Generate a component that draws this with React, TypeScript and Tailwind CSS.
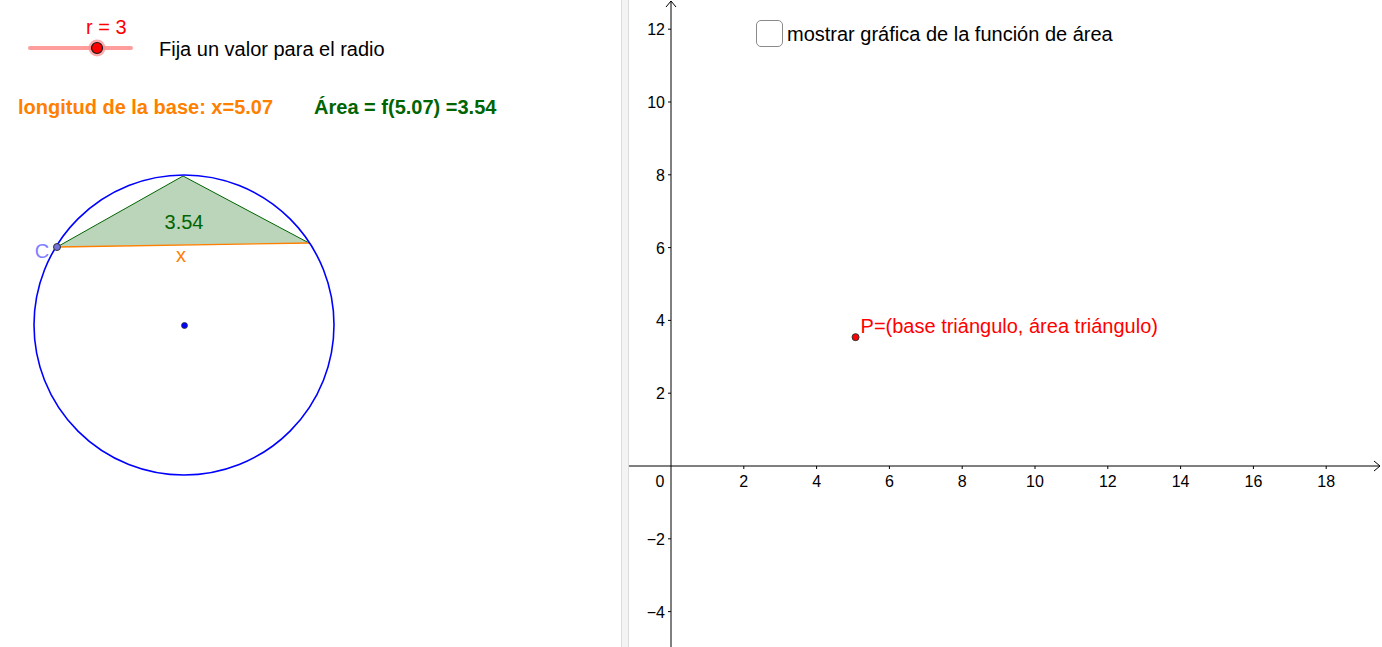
import React from 'react';

const FONT = "font-['Liberation_Sans',Arial,sans-serif]";

// graphics view 2 settings
const ORIGIN_X = 42;
const ORIGIN_Y = 466;
const UNIT = 36.4;

const X_TICKS = [2, 4, 6, 8, 10, 12, 14, 16, 18];
const Y_TICKS = [12, 10, 8, 6, 4, 2, -2, -4];

const px = (v: number) => ORIGIN_X + v * UNIT;
const py = (v: number) => ORIGIN_Y - v * UNIT;

const CircleView: React.FC = () => {
  const C = { x: 57, y: 247 };
  const B = { x: 309, y: 243 };
  const A = { x: 183, y: 176 };
  return (
    <svg width="621" height="647" className="absolute left-0 top-0" style={{ fontFamily: 'Liberation Sans, Arial, sans-serif' }}>
      {/* slider */}
      <line x1="30" y1="48" x2="131" y2="48" stroke="#ff9c9c" strokeWidth="4" strokeLinecap="round" />
      <circle cx="97" cy="48" r="8.5" fill="#ff8f8f" fillOpacity="0.75" />
      <circle cx="97" cy="48" r="5.5" fill="#ff0000" stroke="#1a1a1a" strokeWidth="1.2" />

      {/* triangle */}
      <polygon points={`${C.x},${C.y} ${A.x},${A.y} ${B.x},${B.y}`} fill="#006400" fillOpacity="0.27" />
      <line x1={C.x} y1={C.y} x2={A.x} y2={A.y} stroke="#006400" strokeWidth="1" />
      <line x1={A.x} y1={A.y} x2={B.x} y2={B.y} stroke="#006400" strokeWidth="1" />
      <line x1={C.x} y1={C.y} x2={B.x} y2={B.y} stroke="#ff7f00" strokeWidth="1.4" />

      {/* circle */}
      <circle cx="184" cy="325" r="150" fill="none" stroke="#0000ff" strokeWidth="1.6" />
      <circle cx="184.5" cy="325.5" r="3" fill="#0000ff" stroke="#333" strokeWidth="0.8" />
      <circle cx={C.x} cy={C.y} r="3.5" fill="#7272d9" stroke="#333" strokeWidth="1" />

      <text x="184" y="229" fontSize="20" fill="#006400" textAnchor="middle">3.54</text>
      <text x="181" y="262" fontSize="20" fill="#ff7f00" textAnchor="middle">x</text>
      <text x="42" y="258" fontSize="20" fill="#8080ff" textAnchor="middle">C</text>
    </svg>
  );
};

const AxesView: React.FC = () => (
  <svg width="753" height="647" className="absolute left-0 top-0" style={{ fontFamily: 'Liberation Sans, Arial, sans-serif' }}>
    {/* x axis */}
    <line x1="0" y1={ORIGIN_Y} x2="751" y2={ORIGIN_Y} stroke="#000" strokeWidth="1" />
    <polyline points={`745,${ORIGIN_Y - 5} 751,${ORIGIN_Y} 745,${ORIGIN_Y + 5}`} fill="none" stroke="#000" strokeWidth="1" />
    {/* y axis */}
    <line x1={ORIGIN_X} y1="1" x2={ORIGIN_X} y2="647" stroke="#000" strokeWidth="1" />
    <polyline points={`${ORIGIN_X - 5},7 ${ORIGIN_X},1 ${ORIGIN_X + 5},7`} fill="none" stroke="#000" strokeWidth="1" />

    {X_TICKS.map((k) => (
      <g key={k}>
        <line x1={px(k)} y1={ORIGIN_Y} x2={px(k)} y2={ORIGIN_Y + 3} stroke="#000" strokeWidth="1" />
        <text x={px(k)} y={ORIGIN_Y + 21} fontSize="16" fill="#000" textAnchor="middle">{k}</text>
      </g>
    ))}
    <text x={ORIGIN_X - 11} y={ORIGIN_Y + 21} fontSize="16" fill="#000" textAnchor="middle">0</text>

    {Y_TICKS.map((k) => (
      <g key={k}>
        <line x1={ORIGIN_X - 3} y1={py(k)} x2={ORIGIN_X} y2={py(k)} stroke="#000" strokeWidth="1" />
        <text x={ORIGIN_X - 6} y={py(k) + 6} fontSize="16" fill="#000" textAnchor="end">
          {k < 0 ? `\u2212${-k}` : k}
        </text>
      </g>
    ))}

    {/* point P */}
    <circle cx={px(5.07)} cy={py(3.54)} r="3.5" fill="#ff0000" stroke="#333" strokeWidth="1" />
    <text x={px(5.07) + 5} y="333" fontSize="20" fill="#ff0000">P=(base triángulo, área triángulo)</text>
  </svg>
);

export default function App() {
  return (
    <div className={`flex h-[647px] w-[1382px] overflow-hidden bg-white ${FONT}`}>
      {/* graphics view 1 */}
      <div className="relative h-full w-[621px] shrink-0">
        <CircleView />
        <div className="relative flex flex-col pt-[15px] text-[20px] leading-6">
          <div className="pl-[86px] text-[#ff0000]">r = 3</div>
          <div className="-mt-[2px] pl-[159px] text-black">Fija un valor para el radio</div>
          <div className="mt-[34px] flex gap-[41px] pl-[18px] font-bold">
            <span className="text-[#ff7f00]">longitud de la base: x=5.07</span>
            <span className="text-[#006400]">Área = f(5.07) =3.54</span>
          </div>
        </div>
      </div>

      {/* splitter */}
      <div className="h-full w-[8px] shrink-0 border-x border-[#dcdcdc] bg-[#f4f4f4]" />

      {/* graphics view 2 */}
      <div className="relative h-full flex-1">
        <AxesView />
        <div className="relative flex pl-[127px] pt-[20px]">
          <label className="flex items-center gap-[4px] text-[20px] leading-6 text-black">
            <span className="h-[27px] w-[27px] rounded-[5px] border border-[#8a8a8a] bg-white" />
            <span>mostrar gráfica de la función de área</span>
          </label>
        </div>
      </div>
    </div>
  );
}
